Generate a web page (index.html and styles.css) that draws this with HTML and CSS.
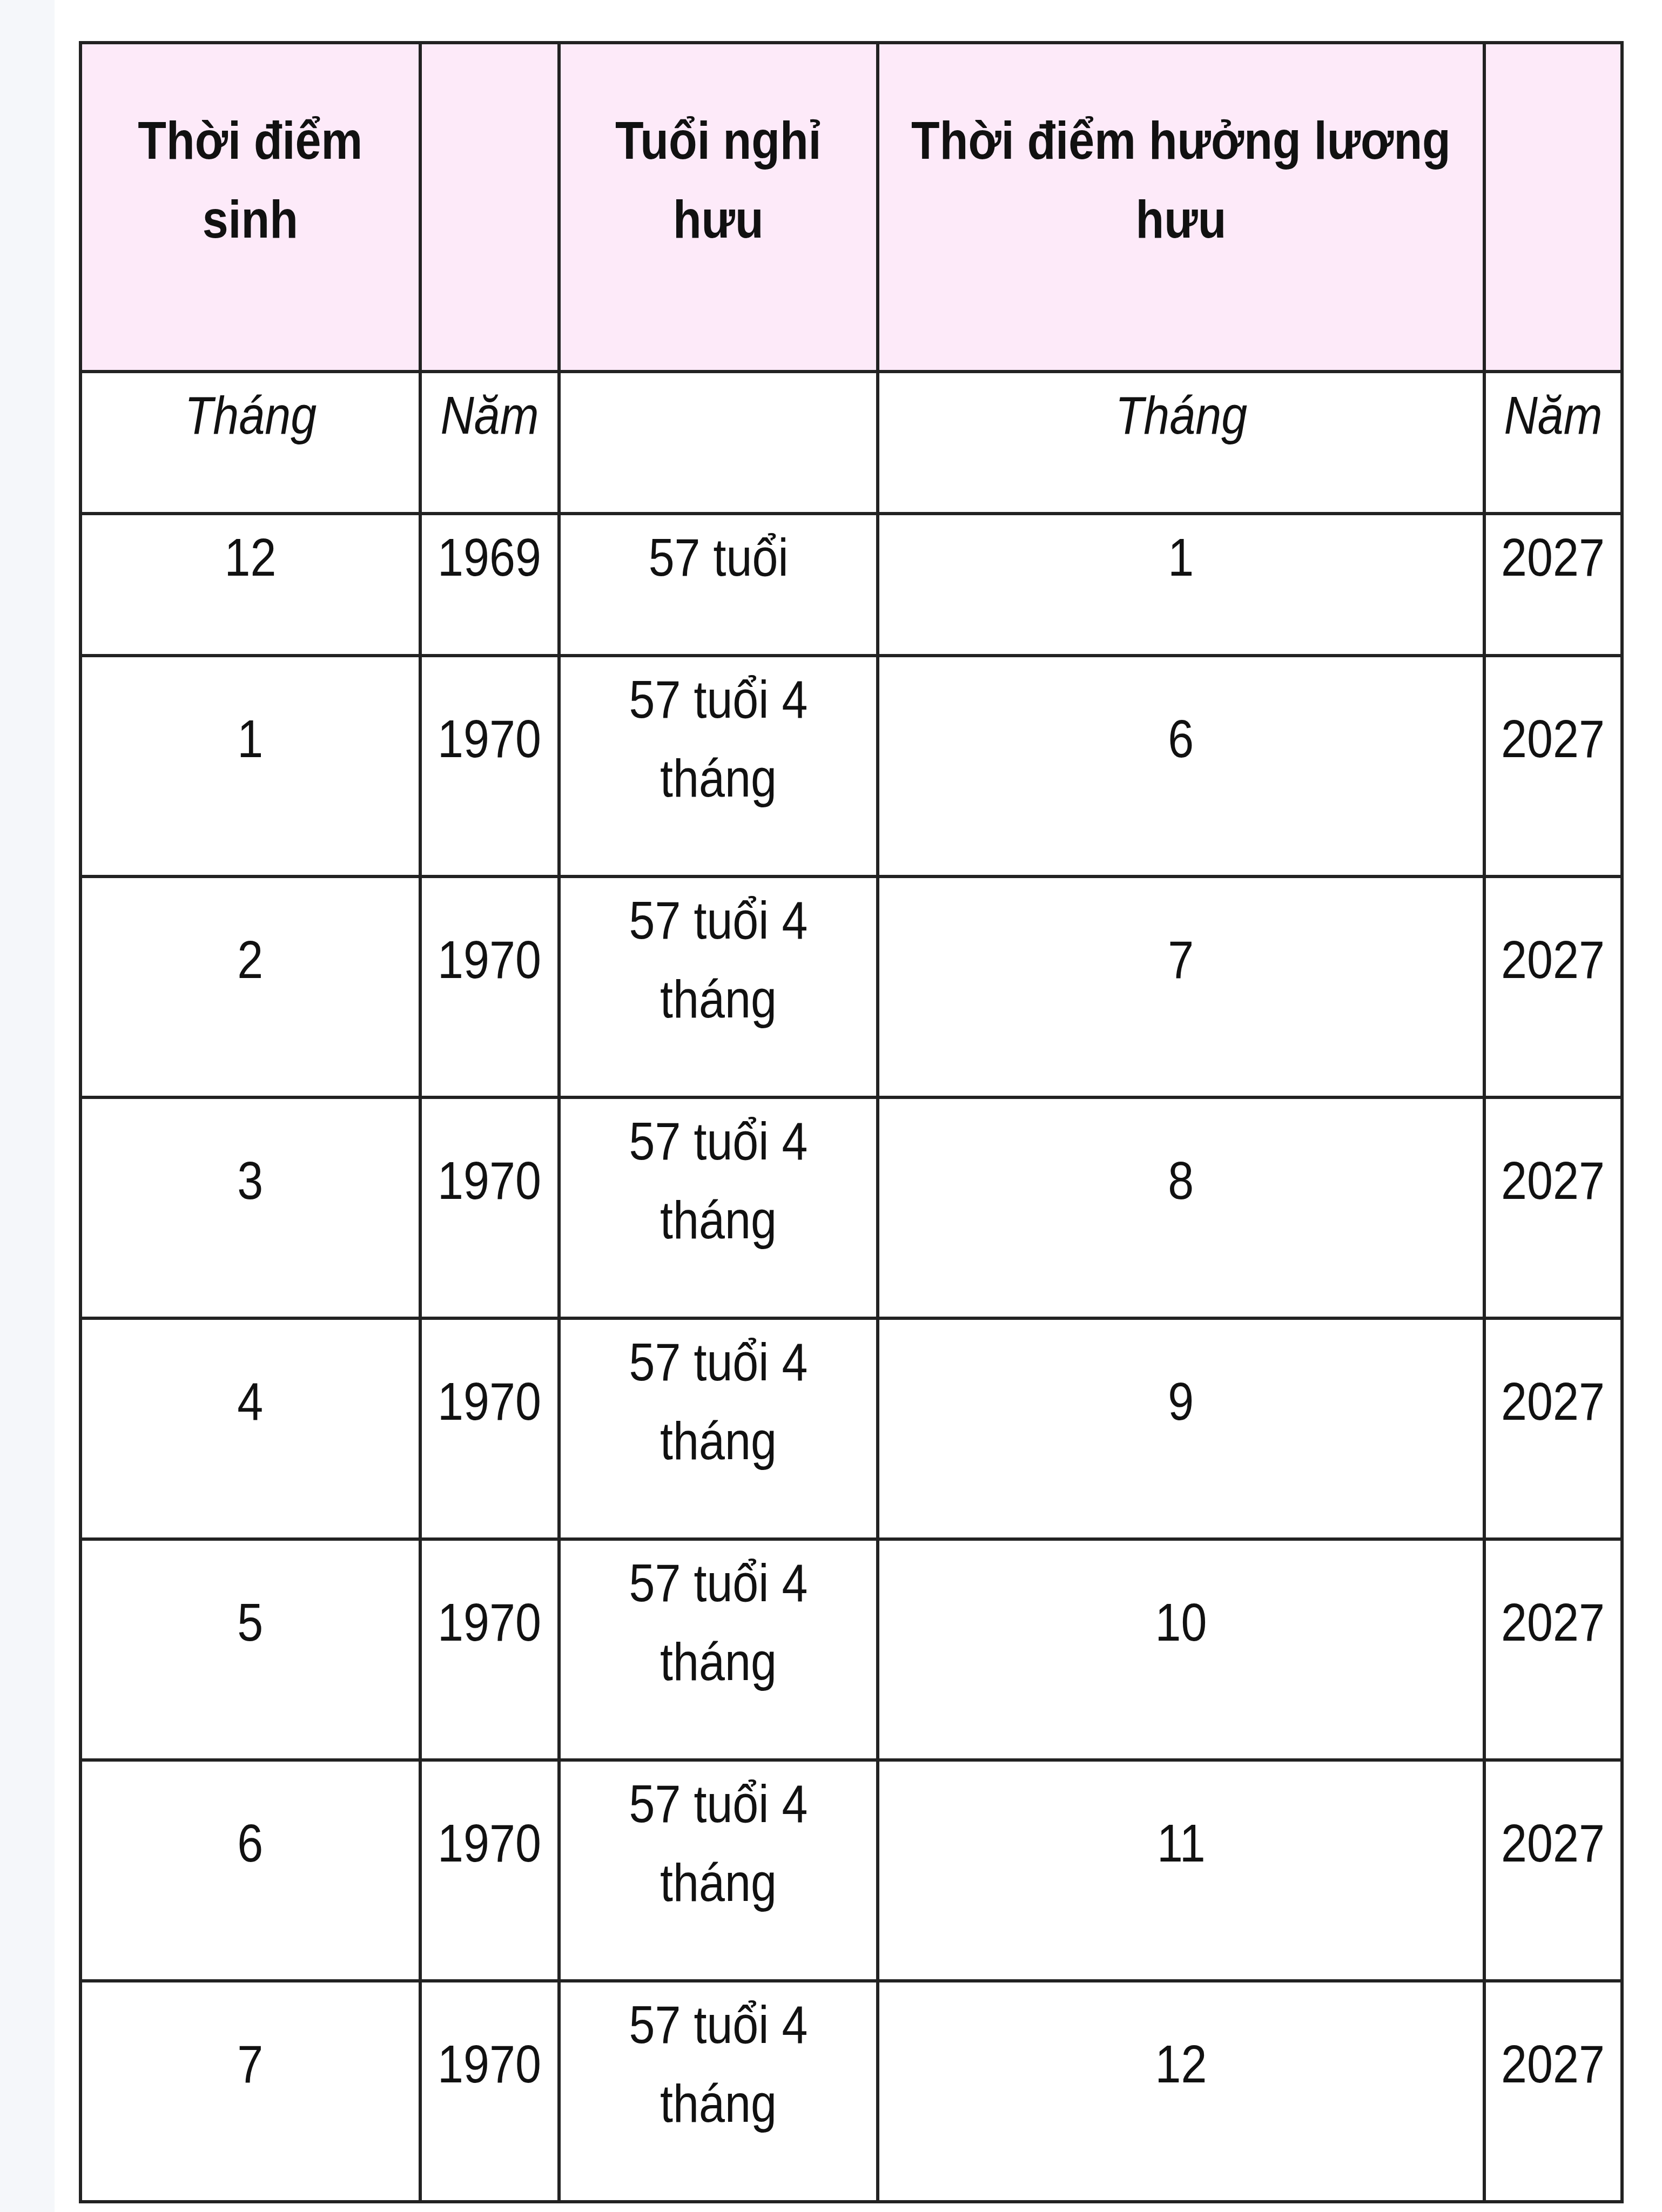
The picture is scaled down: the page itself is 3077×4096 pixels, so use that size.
FILE: index.html
```html
<!DOCTYPE html>
<html lang="vi">
<head>
<meta charset="utf-8">
<title>Tuổi nghỉ hưu</title>
<link rel="stylesheet" href="styles.css">
</head>
<body>
<div class="page">
  <aside class="rail"></aside>
  <main class="content">
    <table class="grid">
      <colgroup>
        <col class="c1"><col class="c2"><col class="c3"><col class="c4"><col class="c5">
      </colgroup>
      <tr class="head">
        <td><p><span class="t">Thời điểm<br>sinh</span></p></td>
        <td></td>
        <td><p><span class="t">Tuổi nghỉ<br>hưu</span></p></td>
        <td><p><span class="t">Thời điểm hưởng lương<br>hưu</span></p></td>
        <td></td>
      </tr>
      <tr class="sub">
        <td><p><span class="t">Tháng</span></p></td>
        <td><p><span class="t">Năm</span></p></td>
        <td></td>
        <td><p><span class="t">Tháng</span></p></td>
        <td><p><span class="t">Năm</span></p></td>
      </tr>
      <tr>
        <td><p><span class="t">12</span></p></td>
        <td><p><span class="t">1969</span></p></td>
        <td><p><span class="t">57 tuổi</span></p></td>
        <td><p><span class="t">1</span></p></td>
        <td><p><span class="t">2027</span></p></td>
      </tr>
      <tr>
        <td><p><span class="t">1</span></p></td>
        <td><p><span class="t">1970</span></p></td>
        <td><p><span class="t">57 tuổi 4<br>tháng</span></p></td>
        <td><p><span class="t">6</span></p></td>
        <td><p><span class="t">2027</span></p></td>
      </tr>
      <tr>
        <td><p><span class="t">2</span></p></td>
        <td><p><span class="t">1970</span></p></td>
        <td><p><span class="t">57 tuổi 4<br>tháng</span></p></td>
        <td><p><span class="t">7</span></p></td>
        <td><p><span class="t">2027</span></p></td>
      </tr>
      <tr>
        <td><p><span class="t">3</span></p></td>
        <td><p><span class="t">1970</span></p></td>
        <td><p><span class="t">57 tuổi 4<br>tháng</span></p></td>
        <td><p><span class="t">8</span></p></td>
        <td><p><span class="t">2027</span></p></td>
      </tr>
      <tr>
        <td><p><span class="t">4</span></p></td>
        <td><p><span class="t">1970</span></p></td>
        <td><p><span class="t">57 tuổi 4<br>tháng</span></p></td>
        <td><p><span class="t">9</span></p></td>
        <td><p><span class="t">2027</span></p></td>
      </tr>
      <tr>
        <td><p><span class="t">5</span></p></td>
        <td><p><span class="t">1970</span></p></td>
        <td><p><span class="t">57 tuổi 4<br>tháng</span></p></td>
        <td><p><span class="t">10</span></p></td>
        <td><p><span class="t">2027</span></p></td>
      </tr>
      <tr>
        <td><p><span class="t">6</span></p></td>
        <td><p><span class="t">1970</span></p></td>
        <td><p><span class="t">57 tuổi 4<br>tháng</span></p></td>
        <td><p><span class="t">11</span></p></td>
        <td><p><span class="t">2027</span></p></td>
      </tr>
      <tr>
        <td><p><span class="t">7</span></p></td>
        <td><p><span class="t">1970</span></p></td>
        <td><p><span class="t">57 tuổi 4<br>tháng</span></p></td>
        <td><p><span class="t">12</span></p></td>
        <td><p><span class="t">2027</span></p></td>
      </tr>
    </table>
  </main>
</div>
</body>
</html>
```
FILE: styles.css
```css
html, body {
  margin: 0;
  padding: 0;
  background: #ffffff;
}

body {
  font-family: "Liberation Sans", Arial, sans-serif;
  color: #111111;
}

.page {
  display: flex;
  min-height: 100vh;
}

.rail {
  flex: 0 0 101px;
  background: #f5f7fa;
}

.content {
  flex: 1 1 auto;
  padding: 76px 0 0 45px;
}

.grid {
  border-collapse: collapse;
  table-layout: fixed;
  width: 2860px;
  border: 6px solid #222222;
}

.c1 { width: 629px; }
.c2 { width: 257px; }
.c3 { width: 590px; }
.c4 { width: 1123px; }
.c5 { width: 255px; }

.grid td {
  border: 6px solid #222222;
  padding: 5px 2px 8px;
  vertical-align: middle;
  text-align: center;
  font-size: 98px;
  line-height: 146px;
}

.grid td p {
  display: flex;
  justify-content: center;
  margin: 0 0 98px;
}

.t {
  flex: 0 0 auto;
  white-space: nowrap;
  text-align: center;
  transform: scaleX(0.88);
  transform-origin: center center;
}

.head {
  height: 609px;
}

.head td {
  background: #fdeaf9;
  font-weight: bold;
}

.sub td {
  font-style: italic;
}
```
